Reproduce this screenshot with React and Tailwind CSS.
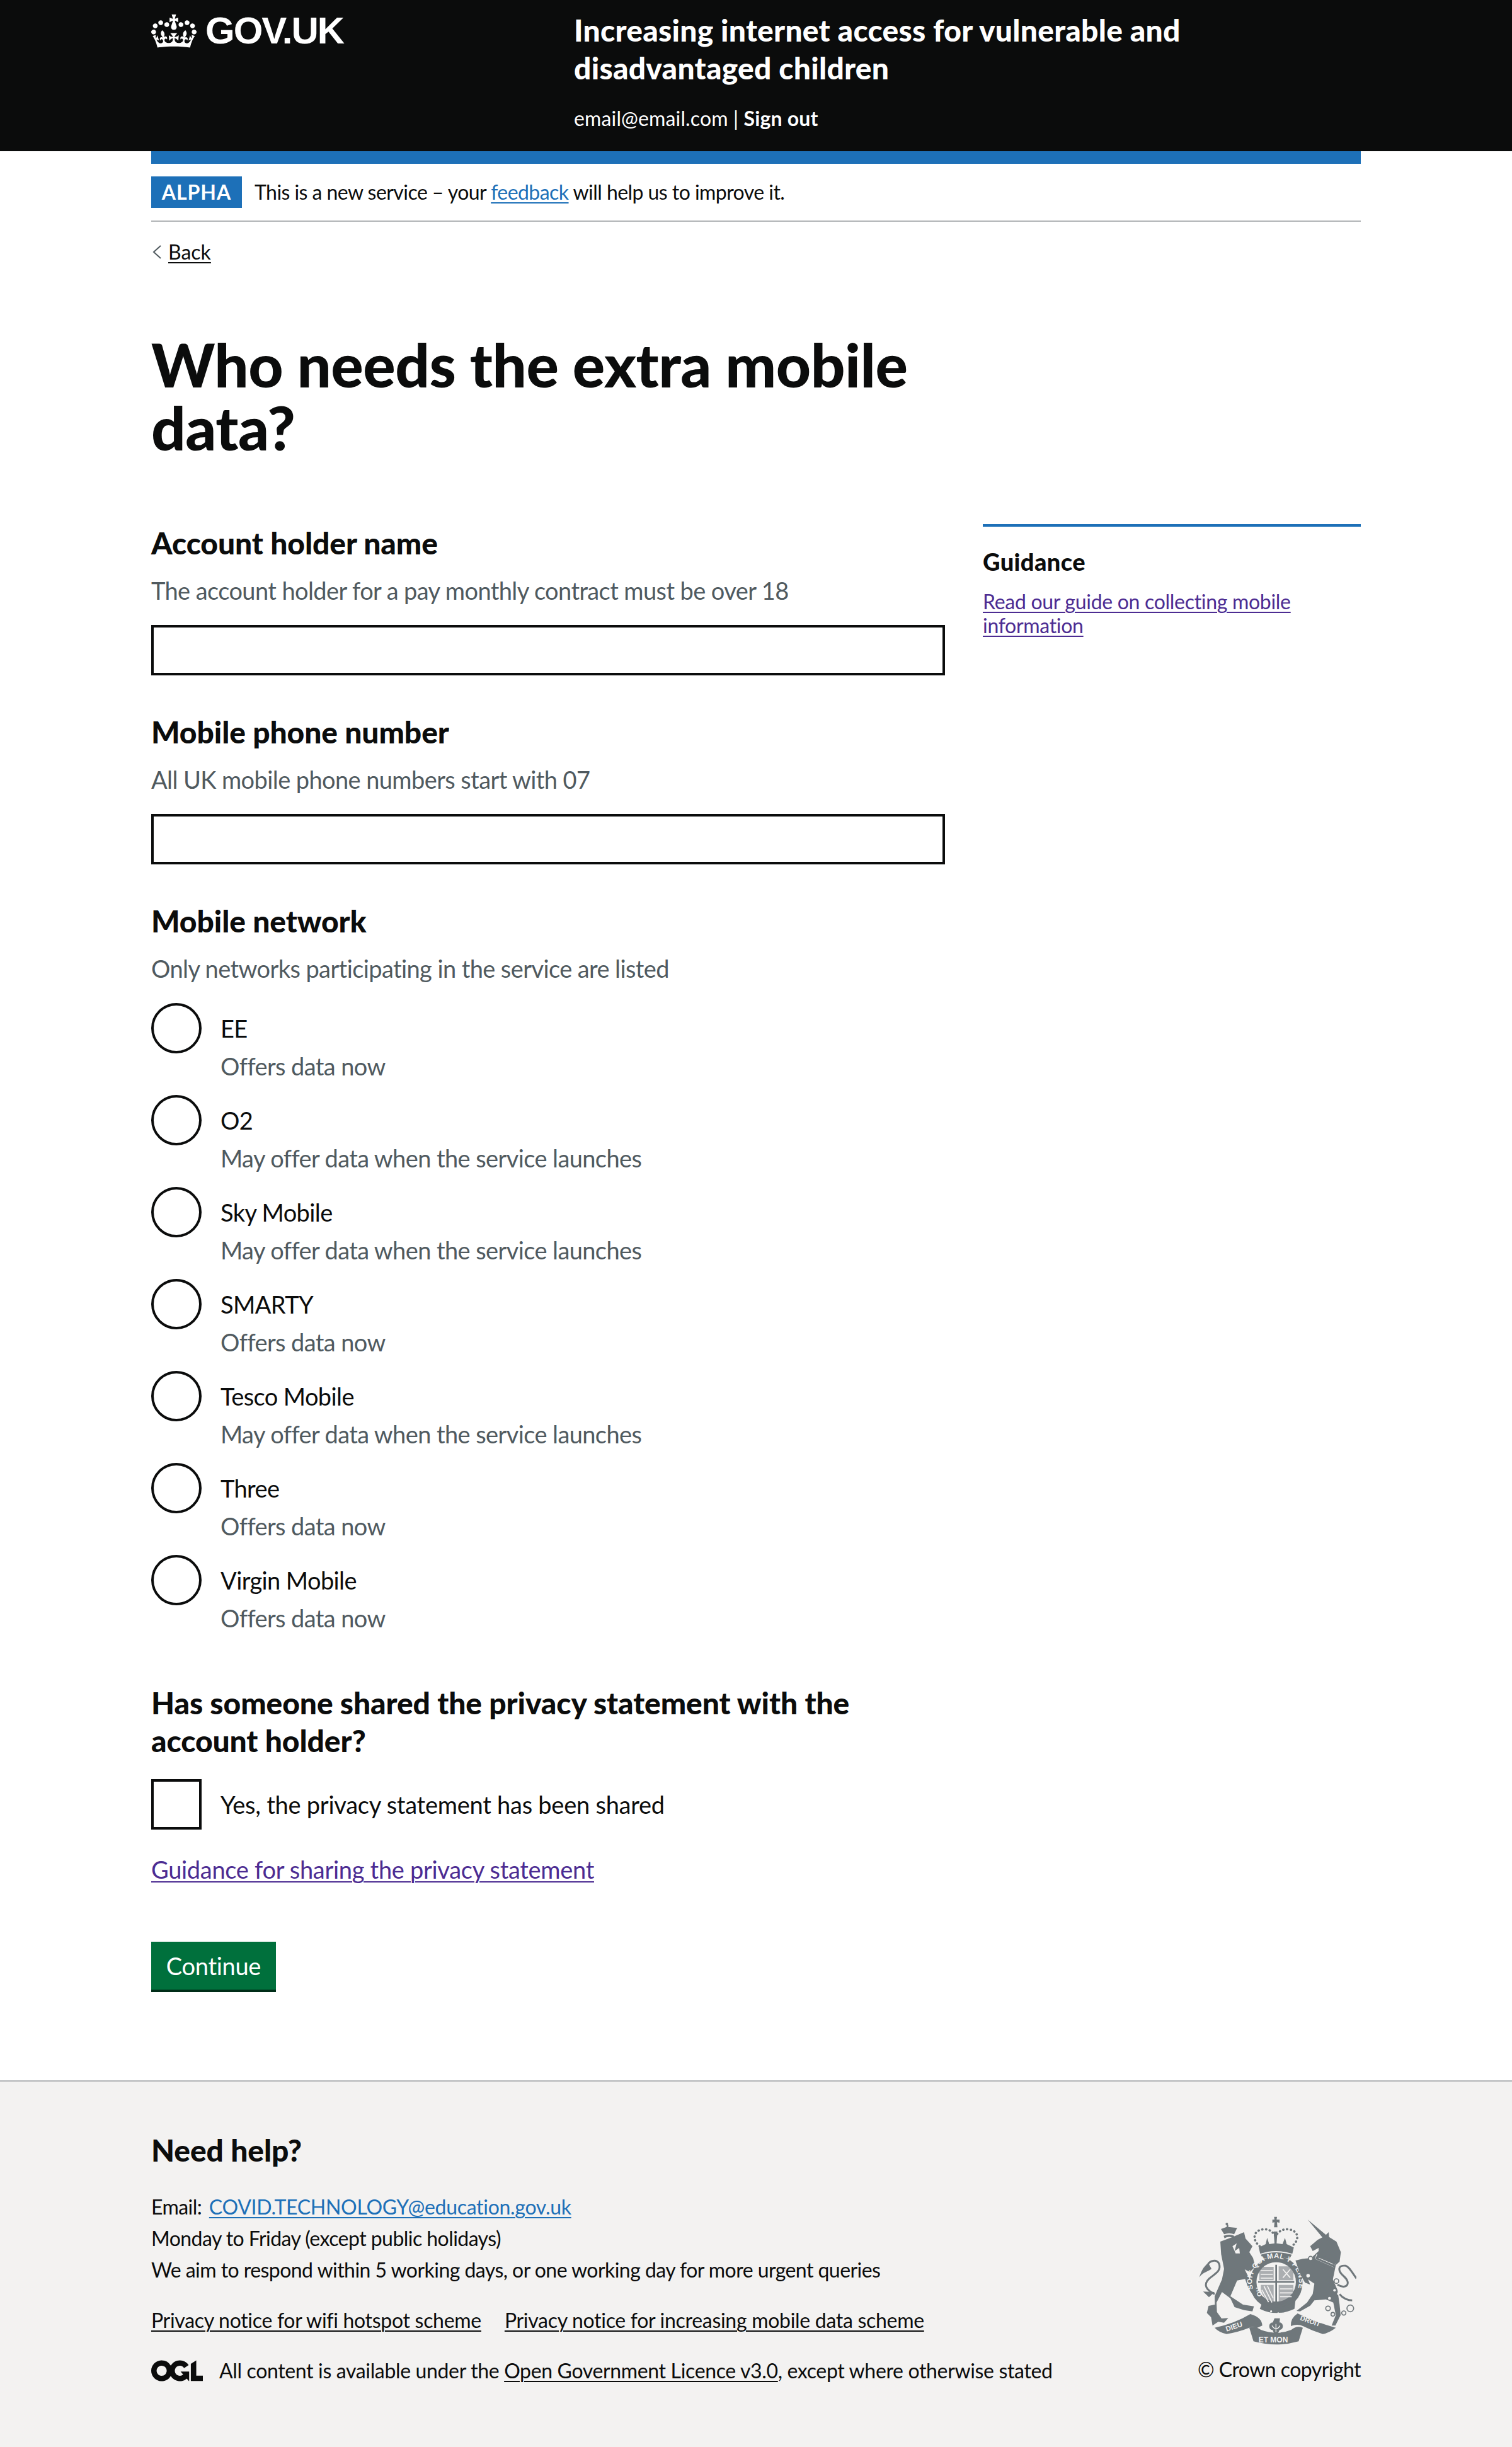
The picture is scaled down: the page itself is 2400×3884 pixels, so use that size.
const NETWORKS = [
  ['EE', 'Offers data now'],
  ['O2', 'May offer data when the service launches'],
  ['Sky Mobile', 'May offer data when the service launches'],
  ['SMARTY', 'Offers data now'],
  ['Tesco Mobile', 'May offer data when the service launches'],
  ['Three', 'Offers data now'],
  ['Virgin Mobile', 'Offers data now'],
]

const FONT = "font-['Lato',sans-serif]"

function Crown() {
  return (
    <svg viewBox="0 0 132 97" className="w-[72px] h-[53px] shrink-0" fill="currentColor">
      <path fillRule="evenodd" d="M25 30.2c3.5 1.5 7.7-.2 9.1-3.7 1.5-3.6-.2-7.8-3.9-9.2-3.6-1.4-7.6.3-9.1 3.9-1.4 3.5.3 7.5 3.9 9zM9 39.5c3.6 1.5 7.8-.2 9.2-3.7 1.5-3.6-.2-7.8-3.9-9.1-3.6-1.5-7.6.2-9.1 3.8-1.4 3.5.3 7.5 3.8 9zM4.4 57.2c3.5 1.5 7.7-.2 9.1-3.8 1.5-3.6-.2-7.7-3.9-9.1-3.5-1.5-7.6.3-9.1 3.8-1.4 3.5.3 7.6 3.9 9.1zm38.3-21.4c3.5 1.5 7.7-.2 9.1-3.8 1.5-3.6-.2-7.7-3.9-9.1-3.6-1.5-7.6.3-9.1 3.8-1.3 3.6.4 7.7 3.9 9.1zm64.4-5.6c-3.6 1.5-7.8-.2-9.1-3.7-1.5-3.6.2-7.8 3.8-9.2 3.6-1.4 7.7.3 9.2 3.9 1.3 3.5-.4 7.5-3.9 9zm15.9 9.3c-3.6 1.5-7.7-.2-9.1-3.7-1.5-3.6.2-7.8 3.7-9.1 3.6-1.5 7.7.2 9.2 3.8 1.5 3.5-.3 7.5-3.8 9zm4.7 17.7c-3.6 1.5-7.8-.2-9.2-3.8-1.5-3.6.2-7.7 3.9-9.1 3.6-1.5 7.7.3 9.2 3.8 1.3 3.5-.4 7.6-3.9 9.1zM89.3 35.8c-3.6 1.5-7.8-.2-9.2-3.8-1.4-3.6.2-7.7 3.9-9.1 3.6-1.5 7.7.3 9.2 3.8 1.4 3.6-.3 7.7-3.9 9.1zM69.7 17.7l8.9 4.7V9.3l-8.9 2.8c-.2-.3-.5-.6-.9-.9L72.4 0H59.6l3.5 11.2c-.3.3-.6.5-.9.9l-8.8-2.8v13.1l8.8-4.7c.3.3.6.7.9.9l-5 15.4v.1c-.2.8-.4 1.6-.4 2.4 0 4.1 3.1 7.5 7 8.1h.2c.3 0 .7.1 1 .1.4 0 .7 0 1-.1h.2c4-.6 7.1-4.1 7.1-8.1 0-.8-.1-1.7-.4-2.4V34l-5.1-15.4c.4-.2.7-.6 1-.9zM66 92.8c16.9 0 32.8 1.1 47.1 3.2 4-16.9 8.9-26.7 14-33.5l-9.6-3.4c1 4.9 1.1 7.2 0 10.2-1.5-1.4-3-4.3-4.2-8.7L108.6 76c2.8-2 5-3.2 7.5-3.3-4.4 9.4-10 11.9-13.6 11.2-4.3-.8-6.3-4.6-5.6-7.9 1-4.7 5.7-5.9 8-.5 4.3-8.7-3-11.4-7.6-8.8 7.1-7.2 7.9-13.5 2.1-21.1-8 6.1-8.1 12.3-4.5 20.8-4.7-5.4-12.1-2.5-9.5 6.2 3.4-5.2 7.9-2 7.2 3.1-.6 4.3-6.4 7.8-13.5 7.2-10.3-.9-10.9-8-11.2-13.8 2.5-.5 7.1 1.8 11 7.3L80.2 60c-4.1 4.4-8 5.3-12.3 5.4 1.4-4.4 8-11.6 8-11.6H55.5s6.4 7.2 7.9 11.6c-4.2-.1-8-1-12.3-5.4l1.4 16.4c3.9-5.5 8.5-7.7 10.9-7.3-.3 5.8-.9 12.8-11.1 13.8-7.2.6-12.9-2.9-13.5-7.2-.7-5 3.8-8.3 7.1-3.1 2.7-8.7-4.6-11.6-9.4-6.2 3.7-8.5 3.6-14.7-4.6-20.8-5.8 7.6-5 13.9 2.2 21.1-4.7-2.6-11.9.1-7.7 8.8 2.3-5.5 7.1-4.2 8.1.5.7 3.3-1.3 7.1-5.7 7.9-3.5.7-9-1.8-13.5-11.2 2.5.1 4.7 1.3 7.5 3.3l-4.7-15.4c-1.2 4.4-2.7 7.2-4.3 8.7-1.1-3-.9-5.3 0-10.2l-9.5 3.4c5 6.9 9.9 16.7 14 33.5 14.8-2.1 30.8-3.2 47.7-3.2z" />
    </svg>
  )
}

function Ogl() {
  return (
    <svg viewBox="0 0 483.2 195.7" className="w-[82px] h-[34px] shrink-0" fill="#0b0c0c">
      <path d="M421.5 142.8V.1l-50.7 32.3v161.1h112.4v-50.7zm-122.3-9.6A47.12 47.12 0 0 1 221 97.8c0-26 21.1-47.1 47.1-47.1 16.7 0 31.4 8.7 39.7 21.8l42.7-27.2A97.63 97.63 0 0 0 268.1 0c-36.5 0-68.3 20.1-85.1 49.7A98 98 0 0 0 97.8 0C43.9 0 0 43.9 0 97.8s43.9 97.8 97.8 97.8c36.5 0 68.3-20.1 85.1-49.7a97.76 97.76 0 0 0 149.6 25.4l19.4 22.2h3v-87.8h-80l24.3 27.5zM97.8 145c-26 0-47.1-21.1-47.1-47.1s21.1-47.1 47.1-47.1 47.2 21 47.2 47S123.8 145 97.8 145" />
    </svg>
  )
}

// royal coat of arms, coordinates traced from the 3x crop
function Crest() {
  const c = '#6f777b'
  const bg = '#f3f2f1'
  return (
    <svg viewBox="130 120 750 612" className="w-[250px] h-[204px]" fill={c}>
      {/* lion crown */}
      <path d="M250 205 L235 180 L262 170 L262 160 L270 160 L270 170 L312 175 L298 205 Q275 195 250 205Z" />
      <circle cx="263" cy="156" r="6" />
      <path d="M248 212 Q275 202 298 212 L296 222 Q272 212 252 224Z" />
      {/* lion */}
      <path d="M232 240 L290 218 L345 195 L352 225 L385 262 L370 290 L388 318 L398 360 L372 385 L348 372 L382 440 L405 475 L385 490 L366 462 L350 418 L312 425 L280 500 L340 540 L392 548 L385 572 L345 566 L300 552 L280 510 L240 480 L214 530 L216 575 L238 606 L270 604 L250 626 L222 622 L195 640 L188 600 L168 580 L176 546 L206 540 L205 500 L240 420 L250 370 L236 300 Z" />
      <path d="M205 490 C165 470 148 445 180 415 C210 392 238 378 226 345 C214 322 182 330 172 350" fill="none" stroke={c} strokeWidth="9" />
      <path d="M175 342 C150 360 140 385 132 410 C150 385 170 385 190 370Z" />
      <path d="M205 480 L150 478 L178 505Z" />
      <path d="M290 262 L310 248 L300 285 L322 270 L325 296 L305 296Z" fill={bg} />

      {/* central crown */}
      <path d="M420 262 C385 235 385 190 432 182 C462 178 480 190 495 215 C510 190 530 178 560 182 C608 190 610 235 572 262" fill="none" stroke={c} strokeWidth="11" strokeLinecap="round" strokeDasharray="1 17" />
      <path d="M415 268 L448 252 L455 222 L465 252 L490 248 L486 192 L504 192 L500 248 L528 252 L540 222 L548 252 L582 268 L575 298 Q497 272 422 298Z" />
      <path d="M480 135 L490 135 L488 122 L502 122 L500 135 L514 135 L514 150 L502 148 L504 172 L488 172 L490 148 L480 150Z" />
      <path d="M425 302 Q497 280 572 302 L562 322 Q497 305 435 322Z" />

      {/* garter and shield */}
      <circle cx="498" cy="436" r="126" />
      <circle cx="498" cy="432" r="94" fill={bg} />
      <path id="garter" d="M390 470 A112 112 0 1 1 596 478" fill="none" />
      <text fontFamily="Liberation Sans, sans-serif" fontWeight="700" fontSize="34" fill={bg}>
        <textPath href="#garter" startOffset="1%" textLength="420">SOIT QUI MAL Y PENSE</textPath>
      </text>
      <path d="M412 428 H584 V436 H412Z M494 350 H502 V530 H494Z" />
      <path d="M418 360 H486 V424 H418Z M510 358 H580 V424 H510Z M510 446 H580 V510 Q545 535 510 542Z" fill={c} opacity="0.55" />
      <path d="M425 446 H486 V540 Q440 520 425 470Z" fill={c} opacity="0.55" />
      <path d="M424 378 H482 M424 396 H482 M424 414 H482 M516 465 H576 M516 484 H576 M516 502 H572 M530 372 L565 412 M565 372 L530 412" stroke={bg} strokeWidth="5" />
      <path d="M440 452 L478 530 M430 470 L462 528 M456 450 L484 510" stroke={bg} strokeWidth="5" />
      <path d="M420 560 Q500 600 585 560 L590 520 Q500 580 432 530 Z" />
      <circle cx="474" cy="572" r="5" fill={bg} />
      <circle cx="508" cy="582" r="5" fill={bg} />
      <text x="375" y="470" fontFamily="Liberation Sans, sans-serif" fontWeight="700" fontSize="30" fill={bg} transform="rotate(80 395 480)">HO</text>

      {/* motto ribbons */}
      <path d="M205 650 Q300 630 375 585 Q430 600 432 640 L405 652 Q385 640 370 650 Q320 670 262 680 Q225 672 205 650Z" />
      <path d="M370 650 Q395 638 425 660 Q500 688 570 660 Q595 638 625 650 L605 715 Q500 745 390 715Z" />
      <path d="M600 582 Q680 622 782 650 Q750 675 720 680 Q670 665 625 642 Q600 630 568 642 Q565 605 600 582Z" />
      <path d="M490 605 L516 605 L514 625 C535 625 535 660 515 660 L505 680 H490 L480 660 C460 660 460 625 482 625 Z" />
      <path d="M497 632 L497 670 M478 640 Q488 655 497 655 Q508 655 516 640" stroke={bg} strokeWidth="4" fill="none" />
      <text x="262" y="668" fontFamily="Liberation Sans, sans-serif" fontWeight="700" fontSize="34" fill={bg} transform="rotate(-18 262 668)">DIEU</text>
      <text x="414" y="720" fontFamily="Liberation Sans, sans-serif" fontWeight="700" fontSize="36" fill={bg}>ET MON</text>
      <text x="610" y="612" fontFamily="Liberation Sans, sans-serif" fontWeight="700" fontSize="32" fill={bg} transform="rotate(20 610 612)">DROIT</text>

      {/* unicorn */}
      <path d="M648 135 L735 208 L748 195 L750 218 L785 240 L806 290 L800 335 L782 352 L768 420 L790 470 L800 540 L805 590 L780 640 L762 640 L782 590 L770 530 L735 515 L680 520 L660 545 L612 572 L595 570 L645 530 L672 490 L680 440 L650 420 L660 445 L635 435 L615 400 L598 355 L590 330 L625 322 L665 318 L700 285 L700 270 L672 285 L660 262 L695 232 L718 220 Z" />
      <path d="M690 300 L780 345 L772 362 L682 322Z" fill={bg} />
      <path d="M692 305 L698 295 L706 305 L715 300 L722 312 L732 308 L738 322 L750 318 L756 332 L770 330 L780 338 L774 362 L684 322Z" />
      <path d="M700 318 L770 348" stroke={bg} strokeWidth="3" />
      <circle cx="662" cy="320" r="10" fill={bg} stroke={c} strokeWidth="5" />
      <circle cx="650" cy="402" r="11" fill={bg} stroke={c} strokeWidth="5" />
      <circle cx="785" cy="428" r="11" fill={bg} stroke={c} strokeWidth="5" />
      <circle cx="776" cy="472" r="6" fill={bg} />
      <circle cx="752" cy="510" r="7" fill={bg} />
      <circle cx="795" cy="488" r="7" fill={bg} />
      <path d="M790 445 C830 470 860 440 820 405 C790 380 790 350 830 355 C845 360 855 380 880 415" fill="none" stroke={c} strokeWidth="9" />
      <path d="M800 490 C815 510 840 520 860 520" fill="none" stroke={c} strokeWidth="9" />
      <circle cx="745" cy="558" r="11" fill="none" stroke={c} strokeWidth="5" />
      <circle cx="768" cy="586" r="9" fill="none" stroke={c} strokeWidth="5" />
      <circle cx="820" cy="580" r="10" fill="none" stroke={c} strokeWidth="5" />
      <circle cx="851" cy="558" r="16" fill="none" stroke={c} strokeWidth="5" />
    </svg>
  )
}

function Hint({ children, className = '' }) {
  return <p className={`text-[38px] leading-[50px] tracking-[-0.6px] text-[#505a5f] ${className}`}>{children}</p>
}

function Heading({ children, className = '' }) {
  return <h2 className={`text-[48px] leading-[60px] font-black tracking-[-0.1px] ${className}`}>{children}</h2>
}

function Field({ label, hint }) {
  return (
    <div className="mb-[60px]">
      <Heading>{label}</Heading>
      <Hint className="mt-[20px]">{hint}</Hint>
      <input type="text" className="block w-full h-[80px] mt-[30px] border-4 border-[#0b0c0c] bg-white" />
    </div>
  )
}

export default function App() {
  return (
    <div className={`${FONT} text-[#0b0c0c] bg-white`}>
      <header className="h-[240px] bg-[#0b0c0c] text-white px-[240px] flex">
        <div className="w-[671px] shrink-0 flex items-start gap-[14px] pt-[23px]">
          <Crown />
          <span className="font-['Liberation_Sans',sans-serif] font-bold text-[60px] leading-[52px] tracking-[-2px]">GOV.UK</span>
        </div>
        <div className="pt-[18px]">
          <p className="text-[48px] leading-[60px] font-black tracking-[0.25px] w-[1000px]">Increasing internet access for vulnerable and disadvantaged children</p>
          <p className="mt-[25px] text-[32px] leading-[50px] tracking-[0.15px]">
            email@email.com | <a href="#" className="font-bold">Sign out</a>
          </p>
        </div>
      </header>

      <div className="mx-[240px]">
        <div className="h-[20px] bg-[#1d70b8]" />
        <div className="pt-[20px] pb-[20px] border-b-2 border-[#b1b4b6] flex items-center">
          <strong className="h-[50px] w-[144px] bg-[#1d70b8] text-white text-[32px] leading-[50px] font-bold text-center tracking-[1px]">ALPHA</strong>
          <p className="ml-[20px] text-[32px] leading-[50px] tracking-[-0.55px]">
            This is a new service – your <a href="#" className="text-[#1d70b8] underline decoration-2 underline-offset-4">feedback</a> will help us to improve it.
          </p>
        </div>
        <a href="#" className="mt-[28px] flex items-center h-[40px] text-[32px] leading-[40px]">
          <svg viewBox="0 0 14 22" className="w-[14px] h-[22px] mr-[11px] ml-[2px] shrink-0" fill="none" stroke="#505a5f" strokeWidth="2">
            <path d="M13 1 L2 11 L13 21" />
          </svg>
          <span className="underline decoration-2 underline-offset-4">Back</span>
        </a>

        <h1 className="mt-[108px] mb-[104px] w-[1260px] text-[96px] leading-[100px] font-black tracking-[-0.5px]">Who needs the extra mobile data?</h1>

        <div className="flex gap-[60px]">
          <main className="w-[1260px] shrink-0">
            <Field label="Account holder name" hint="The account holder for a pay monthly contract must be over 18" />
            <Field label="Mobile phone number" hint="All UK mobile phone numbers start with 07" />

            <Heading>Mobile network</Heading>
            <Hint className="mt-[20px]">Only networks participating in the service are listed</Hint>
            <div className="mt-[30px]">
              {NETWORKS.map(([name, note]) => (
                <label key={name} className="flex h-[146px]">
                  <input type="radio" name="network" className="appearance-none w-[80px] h-[80px] rounded-full border-4 border-[#0b0c0c] bg-white shrink-0" />
                  <span className="ml-[30px] pt-[15px] block">
                    <span className="block text-[38px] leading-[50px] tracking-[-0.6px]">{name}</span>
                    <Hint className="mt-[10px]">{note}</Hint>
                  </span>
                </label>
              ))}
            </div>

            <Heading className="mt-[59px] w-[1180px]">Has someone shared the privacy statement with the account holder?</Heading>
            <label className="mt-[31px] flex items-center">
              <input type="checkbox" className="appearance-none w-[80px] h-[80px] border-4 border-[#0b0c0c] bg-white shrink-0" />
              <span className="ml-[30px] text-[38px] leading-[50px] tracking-[-0.25px]">Yes, the privacy statement has been shared</span>
            </label>
            <a href="#" className="mt-[38px] block text-[38px] leading-[50px] tracking-[-0.3px] text-[#4c2c92] underline decoration-2 underline-offset-4">Guidance for sharing the privacy statement</a>
            <button className="mt-[90px] block w-[198px] h-[76px] mb-[4px] bg-[#00703c] text-white text-[38px] leading-[50px] tracking-[-0.3px] shadow-[0_4px_0_#002d18]">Continue</button>
          </main>

          <aside className="w-[600px] border-t-4 border-[#1d70b8] self-start pt-[30px]">
            <h3 className="text-[38px] leading-[50px] font-black tracking-[0.4px]">Guidance</h3>
            <p className="mt-[20px] text-[32px] leading-[38px] tracking-[-0.3px]">
              <a href="#" className="text-[#4c2c92] underline decoration-2 underline-offset-4">Read our guide on collecting mobile information</a>
            </p>
          </aside>
        </div>
      </div>

      <footer className="mt-[140px] h-[582px] bg-[#f3f2f1] border-t-2 border-[#b1b4b6] px-[240px] pt-[79px] flex justify-between items-start">
        <div>
          <Heading>Need help?</Heading>
          <div className="mt-[35px] text-[32px] leading-[50px] tracking-[-0.55px]">
            <p>Email: <a href="#" className="ml-[4px] text-[#1d70b8] underline decoration-2 underline-offset-4 tracking-[-0.3px]">COVID.TECHNOLOGY@education.gov.uk</a></p>
            <p>Monday to Friday (except public holidays)</p>
            <p>We aim to respond within 5 working days, or one working day for more urgent queries</p>
          </div>
          <div className="mt-[35px] flex gap-[37px] text-[32px] leading-[40px] tracking-[-0.3px]">
            <a href="#" className="underline decoration-2 underline-offset-4">Privacy notice for wifi hotspot scheme</a>
            <a href="#" className="underline decoration-2 underline-offset-4">Privacy notice for increasing mobile data scheme</a>
          </div>
          <div className="mt-[40px] flex items-center gap-[26px] text-[32px] leading-[40px] tracking-[-0.35px]">
            <Ogl />
            <p>All content is available under the <a href="#" className="underline decoration-2 underline-offset-4">Open Government Licence v3.0</a>, except where otherwise stated</p>
          </div>
        </div>
        <div className="flex flex-col items-end mt-[135px]">
          <div className="mr-[7px]"><Crest /></div>
          <a href="#" className="mt-[19px] text-[32px] leading-[40px] tracking-[-0.55px]">© Crown copyright</a>
        </div>
      </footer>
    </div>
  )
}
